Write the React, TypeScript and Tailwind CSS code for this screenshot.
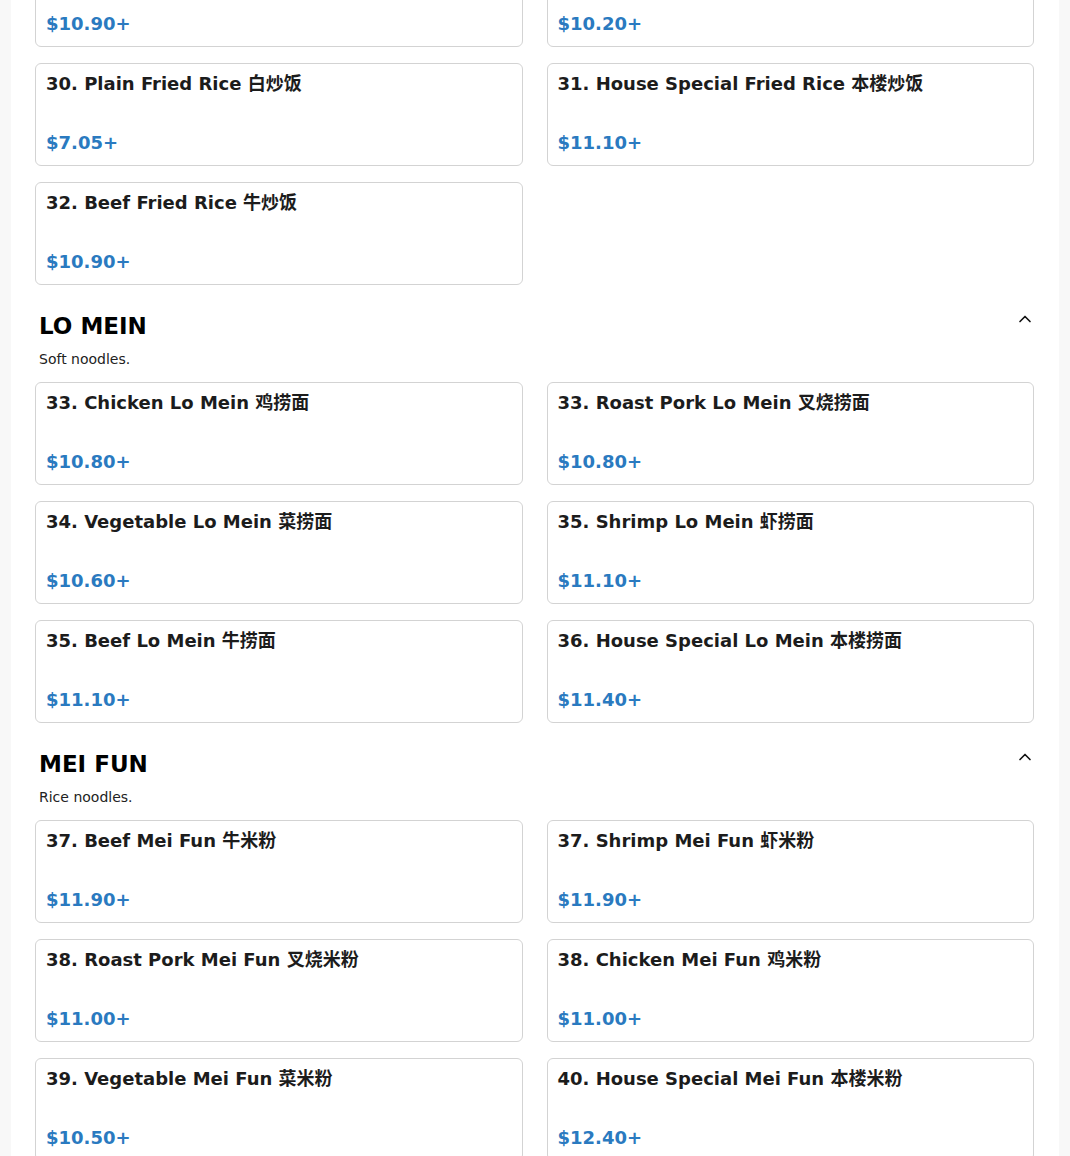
import React from "react";

type Item = { name: string; price: string };

const friedRice: Item[] = [
  { name: "29. Shrimp Fried Rice 虾炒饭", price: "$10.90+" },
  { name: "29. Chicken Fried Rice 鸡炒饭", price: "$10.20+" },
  { name: "30. Plain Fried Rice 白炒饭", price: "$7.05+" },
  { name: "31. House Special Fried Rice 本楼炒饭", price: "$11.10+" },
  { name: "32. Beef Fried Rice 牛炒饭", price: "$10.90+" },
];

const loMein: Item[] = [
  { name: "33. Chicken Lo Mein 鸡捞面", price: "$10.80+" },
  { name: "33. Roast Pork Lo Mein 叉烧捞面", price: "$10.80+" },
  { name: "34. Vegetable Lo Mein 菜捞面", price: "$10.60+" },
  { name: "35. Shrimp Lo Mein 虾捞面", price: "$11.10+" },
  { name: "35. Beef Lo Mein 牛捞面", price: "$11.10+" },
  { name: "36. House Special Lo Mein 本楼捞面", price: "$11.40+" },
];

const meiFun: Item[] = [
  { name: "37. Beef Mei Fun 牛米粉", price: "$11.90+" },
  { name: "37. Shrimp Mei Fun 虾米粉", price: "$11.90+" },
  { name: "38. Roast Pork Mei Fun 叉烧米粉", price: "$11.00+" },
  { name: "38. Chicken Mei Fun 鸡米粉", price: "$11.00+" },
  { name: "39. Vegetable Mei Fun 菜米粉", price: "$10.50+" },
  { name: "40. House Special Mei Fun 本楼米粉", price: "$12.40+" },
];

function Card({ item }: { item: Item }) {
  return (
    <div className="h-[103px] rounded-[6px] border border-[#d3d3d3] bg-white px-[10px] pt-[9px] pb-[12px] flex flex-col justify-between">
      <div className="text-[18px] leading-[21px] font-bold text-[#1c1c1c]">{item.name}</div>
      <div className="text-[18px] leading-[21px] font-bold text-[#2a7ac0]">{item.price}</div>
    </div>
  );
}

function Grid({ items, className = "" }: { items: Item[]; className?: string }) {
  return (
    <div className={"grid grid-cols-2 gap-x-6 gap-y-4 " + className}>
      {items.map((it, i) => (
        <Card key={i} item={it} />
      ))}
    </div>
  );
}

function ChevronUp() {
  return (
    <svg width="20" height="20" viewBox="0 0 24 24" fill="none" stroke="#111" strokeWidth="2" strokeLinecap="round" strokeLinejoin="round">
      <path d="m18 15-6-6-6 6" />
    </svg>
  );
}

function Section({ title, desc, items }: { title: string; desc: string; items: Item[] }) {
  return (
    <section className="mt-[25px]">
      <div className="flex items-start justify-between pl-1 -mr-[1px]">
        <h2 className="text-[23px] leading-[32px] font-bold text-black">{title}</h2>
        <div className="-mt-[1px]">
          <ChevronUp />
        </div>
      </div>
      <p className="mt-[7px] pl-1 text-[14px] leading-[20px] text-[#222]">{desc}</p>
      <Grid items={items} className="mt-[13px]" />
    </section>
  );
}

export default function App() {
  return (
    <div
      className="min-h-screen bg-[#f8f8f8] overflow-hidden"
      style={{ fontFamily: '"DejaVu Sans", "Noto Sans CJK SC", sans-serif' }}
    >
      <div className="mx-[11px] bg-white pl-6 pr-[25px] pb-10">
        <Grid items={friedRice} className="-mt-[56px]" />
        <Section title="LO MEIN" desc="Soft noodles." items={loMein} />
        <Section title="MEI FUN" desc="Rice noodles." items={meiFun} />
      </div>
    </div>
  );
}
